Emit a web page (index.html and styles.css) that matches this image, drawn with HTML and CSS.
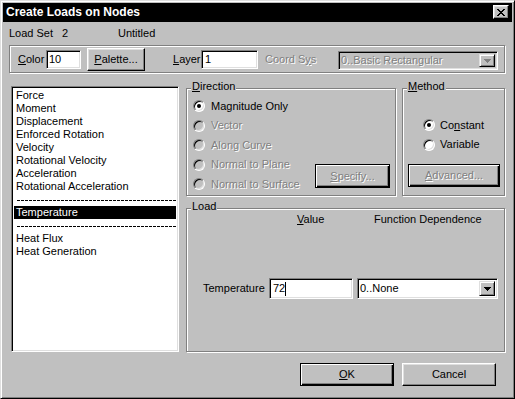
FILE: index.html
```html
<!DOCTYPE html>
<html>
<head>
<meta charset="utf-8">
<title>Create Loads on Nodes</title>
<link rel="stylesheet" href="styles.css">
</head>
<body>
<div class="window">
  <div class="titlebar">
    <span class="title">Create Loads on Nodes</span>
    <div class="close">
      <svg width="8" height="7" viewBox="0 0 8 7" shape-rendering="crispEdges">
        <rect x="0" y="0" width="2" height="1" fill="#000"/><rect x="6" y="0" width="2" height="1" fill="#000"/>
        <rect x="1" y="1" width="2" height="1" fill="#000"/><rect x="5" y="1" width="2" height="1" fill="#000"/>
        <rect x="2" y="2" width="4" height="1" fill="#000"/>
        <rect x="3" y="3" width="2" height="1" fill="#000"/>
        <rect x="2" y="4" width="4" height="1" fill="#000"/>
        <rect x="1" y="5" width="2" height="1" fill="#000"/><rect x="5" y="5" width="2" height="1" fill="#000"/>
        <rect x="0" y="6" width="2" height="1" fill="#000"/><rect x="6" y="6" width="2" height="1" fill="#000"/>
      </svg>
    </div>
  </div>

  <div class="info">
    <span class="info-a">Load Set</span><span class="info-b">2</span><span>Untitled</span>
  </div>

  <div class="topframe">
    <span class="lbl lbl-color"><u>C</u>olor</span>
    <div class="field f-color">10</div>
    <div class="btn b-palette"><u>P</u>alette...</div>
    <span class="lbl lbl-layer"><u>L</u>ayer</span>
    <div class="field f-layer">1</div>
    <span class="lbl lbl-coord disabled">Coord S<u>y</u>s</span>
    <div class="combo combo-coord">
      <span class="combo-text disabled">0..Basic Rectangular</span>
      <span class="drop"><svg width="7" height="4" viewBox="0 0 7 4" shape-rendering="crispEdges"><polygon points="0,0 7,0 3.5,4" fill="#808080"/></svg></span>
    </div>
  </div>

  <div class="main">
    <div class="listbox">
      <div class="item">Force</div>
      <div class="item">Moment</div>
      <div class="item">Displacement</div>
      <div class="item">Enforced Rotation</div>
      <div class="item">Velocity</div>
      <div class="item">Rotational Velocity</div>
      <div class="item">Acceleration</div>
      <div class="item">Rotational Acceleration</div>
      <div class="sep"></div>
      <div class="item selected">Temperature</div>
      <div class="sep"></div>
      <div class="item">Heat Flux</div>
      <div class="item">Heat Generation</div>
    </div>

    <div class="right">
      <div class="row-top">
        <div class="group g-direction">
          <span class="legend"><u>D</u>irection</span>
          <div class="radios">
            <div class="radio-row"><span class="radio checked"></span><span>Magnitude Only</span></div>
            <div class="radio-row"><span class="radio off"></span><span class="disabled">Vector</span></div>
            <div class="radio-row"><span class="radio off"></span><span class="disabled">Along Curve</span></div>
            <div class="radio-row"><span class="radio off"></span><span class="disabled">Normal to Plane</span></div>
            <div class="radio-row"><span class="radio off"></span><span class="disabled">Normal to Surface</span></div>
          </div>
          <div class="btn btn-default b-specify"><span class="disabled"><u>S</u>pecify...</span></div>
        </div>
        <div class="group g-method">
          <span class="legend"><u>M</u>ethod</span>
          <div class="m-radios">
            <div class="radio-row"><span class="radio checked"></span><span>Co<u>n</u>stant</span></div>
            <div class="radio-row"><span class="radio"></span><span>Variable</span></div>
          </div>
          <div class="btn btn-default b-advanced"><span class="disabled"><u>A</u>dvanced...</span></div>
        </div>
      </div>

      <div class="group g-load">
        <span class="legend">Load</span>
        <div class="load-head">
          <span class="h-value"><u>V</u>alue</span><span>Function Dependence</span>
        </div>
        <div class="load-row">
          <span class="t-label">Temperature</span>
          <div class="field f-temp">72<span class="caret"></span></div>
          <div class="combo combo-func">
            <span class="combo-text">0..None</span>
            <span class="drop"><svg width="7" height="4" viewBox="0 0 7 4" shape-rendering="crispEdges"><polygon points="0,0 7,0 3.5,4" fill="#000"/></svg></span>
          </div>
        </div>
      </div>
    </div>
  </div>

  <div class="actions">
    <div class="btn btn-default b-ok"><u>O</u>K</div>
    <div class="btn b-cancel">Cancel</div>
  </div>
</div>
</body>
</html>
```

FILE: styles.css
```css
* { box-sizing: border-box; }

html, body {
  margin: 0;
  padding: 0;
  background: #c0c0c0;
}

body {
  font-family: "Liberation Sans", Arial, sans-serif;
  font-size: 11px;
  line-height: 13px;
  color: #000;
}

u { text-decoration: underline; }

.disabled {
  color: #808080;
  text-shadow: 1px 1px 0 #fff;
}

.window {
  width: 515px;
  height: 399px;
  background: #c0c0c0;
  border: 1px solid;
  border-color: #dfdfdf #000 #000 #dfdfdf;
  box-shadow: inset 1px 1px 0 #fff, inset -1px -1px 0 #808080;
  padding: 2px;
  display: flex;
  flex-direction: column;
}

/* title bar */
.titlebar {
  height: 19px;
  background: #000;
  display: flex;
  align-items: flex-start;
  flex: none;
}

.title {
  color: #fff;
  font-weight: bold;
  font-size: 12px;
  line-height: 19px;
  padding-left: 3px;
}

.close {
  margin-left: auto;
  margin-top: 2px;
  margin-right: 3px;
  width: 16px;
  height: 14px;
  background: #c0c0c0;
  border: 1px solid;
  border-color: #fff #000 #000 #fff;
  box-shadow: inset -1px -1px 0 #808080, inset 1px 1px 0 #dfdfdf;
  display: flex;
  align-items: center;
  justify-content: center;
}

.close svg { display: block; }

/* info row */
.info {
  margin-top: 5px;
  padding-left: 6px;
  height: 13px;
  display: flex;
  flex: none;
}

.info-a { width: 53px; }
.info-b { width: 56px; }

/* common widgets */
.field {
  background: #fff;
  border: 1px solid;
  border-color: #808080 #fff #fff #808080;
  box-shadow: inset 1px 1px 0 #000, inset -1px -1px 0 #dfdfdf;
  padding-left: 3px;
  display: flex;
  align-items: center;
  white-space: nowrap;
}

.btn {
  background: #c0c0c0;
  border: 1px solid;
  border-color: #fff #000 #000 #fff;
  box-shadow: inset -1px -1px 0 #808080, inset 1px 1px 0 #dfdfdf;
  display: flex;
  align-items: center;
  justify-content: center;
  white-space: nowrap;
  flex: none;
}

.btn-default {
  border: 1px solid #000;
  box-shadow: inset 1px 1px 0 #fff, inset -1px -1px 0 #000, inset -2px -2px 0 #808080;
}

.combo {
  border: 1px solid;
  border-color: #808080 #fff #fff #808080;
  box-shadow: inset 1px 1px 0 #000, inset -1px -1px 0 #dfdfdf;
  padding: 2px;
  display: flex;
  align-items: stretch;
  flex: none;
}

.combo-text {
  flex: 1;
  display: flex;
  align-items: center;
  padding-left: 0;
  white-space: nowrap;
}

.combo-func { background: #fff; }
.combo-coord { background: #c0c0c0; }

.drop {
  width: 16px;
  flex: none;
  background: #c0c0c0;
  border: 1px solid;
  border-color: #dfdfdf #000 #000 #dfdfdf;
  box-shadow: inset 1px 1px 0 #fff, inset -1px -1px 0 #808080;
  display: flex;
  align-items: center;
  justify-content: center;
}

.drop svg { display: block; }

/* top frame */
.topframe {
  margin-top: 5px;
  margin-left: 6px;
  width: 496px;
  height: 28px;
  flex: none;
  border: 1px solid #808080;
  box-shadow: inset 1px 1px 0 #fff, 1px 1px 0 #fff;
  padding-left: 8px;
  display: flex;
  align-items: flex-start;
}

.lbl {
  margin-top: 7px;
  white-space: nowrap;
  flex: none;
}

.lbl-color { width: 28px; }
.f-color { width: 35px; height: 19px; margin-top: 4px; padding-left: 2px; }
.b-palette { width: 58px; height: 23px; margin-top: 2px; margin-left: 6px; }
.lbl-layer { width: 28px; margin-left: 28px; }
.f-layer { width: 57px; height: 19px; margin-top: 4px; }
.lbl-coord { width: 73px; margin-left: 7px; }
.combo-coord { width: 160px; height: 19px; margin-top: 5px; }

/* main area */
.main {
  margin-top: 13px;
  margin-left: 8px;
  display: flex;
  gap: 7px;
  flex: none;
}

.listbox {
  width: 168px;
  height: 266px;
  background: #fff;
  border: 1px solid;
  border-color: #808080 #fff #fff #808080;
  box-shadow: inset 1px 1px 0 #000, inset -1px -1px 0 #dfdfdf;
  padding: 2px;
}

.item {
  height: 13px;
  line-height: 13px;
  padding-left: 2px;
  white-space: nowrap;
}

.item.selected {
  background: #000;
  color: #fff;
}

.sep {
  height: 13px;
  position: relative;
}

.sep::after {
  content: "";
  position: absolute;
  left: 3px;
  right: 0;
  top: 7px;
  height: 1px;
  background: repeating-linear-gradient(90deg, #000 0 3px, transparent 3px 4px);
}

.right {
  width: 319px;
  display: flex;
  flex-direction: column;
}

.row-top {
  display: flex;
  gap: 6px;
  margin-top: 2px;
}

.group {
  position: relative;
  border: 1px solid #808080;
  box-shadow: inset 1px 1px 0 #fff, 1px 1px 0 #fff;
}

.legend {
  position: absolute;
  top: -9px;
  left: 4px;
  padding: 0 1px;
  background: #c0c0c0;
  line-height: 13px;
  white-space: nowrap;
}

.g-direction {
  width: 210px;
  height: 108px;
  display: flex;
  padding-left: 6px;
  padding-top: 7.5px;
}

.radios { display: flex; flex-direction: column; }

.radio-row {
  height: 19.5px;
  display: flex;
  align-items: center;
  white-space: nowrap;
}

.radio {
  width: 12px;
  height: 12px;
  flex: none;
  border-radius: 50%;
  border: 1px solid;
  border-color: #808080 #fff #fff #808080;
  box-shadow: inset 1px 1px 0 #000, inset -1px -1px 0 #dfdfdf;
  background: #fff;
  margin-right: 6px;
  position: relative;
}

.radio.off { background: #c0c0c0; }

.radio.checked::after {
  content: "";
  position: absolute;
  left: 3px;
  top: 3px;
  width: 4px;
  height: 4px;
  border-radius: 50%;
  background: #000;
}

.b-specify {
  width: 75px;
  height: 24px;
  margin-left: auto;
  margin-right: 5px;
  align-self: flex-end;
  margin-bottom: 7px;
}

.g-method {
  width: 103px;
  height: 108px;
  display: flex;
  flex-direction: column;
  padding-top: 26.5px;
}

.m-radios { padding-left: 20px; }
.g-method .radio { margin-right: 5px; }

.b-advanced {
  width: 92px;
  height: 23px;
  margin-left: 5px;
  margin-top: 9.5px;
}

.g-load {
  margin-top: 12px;
  width: 319px;
  height: 144px;
}

.load-head {
  margin-top: 4px;
  padding-left: 110px;
  display: flex;
  height: 13px;
  white-space: nowrap;
}

.h-value { width: 77px; }

.load-row {
  margin-top: 52px;
  display: flex;
  align-items: center;
  height: 21px;
}

.t-label {
  margin-left: 16px;
  width: 66px;
  white-space: nowrap;
}

.f-temp {
  width: 84px;
  height: 21px;
}

.caret {
  display: inline-block;
  width: 1px;
  height: 14px;
  background: #000;
  margin-left: 0;
}

.combo-func {
  width: 141px;
  height: 21px;
  margin-left: 4px;
}

/* bottom buttons */
.actions {
  margin-top: 11px;
  display: flex;
  justify-content: flex-end;
  gap: 8px;
  padding-right: 16px;
  flex: none;
}

.b-ok, .b-cancel {
  width: 94px;
  height: 23px;
}
```
